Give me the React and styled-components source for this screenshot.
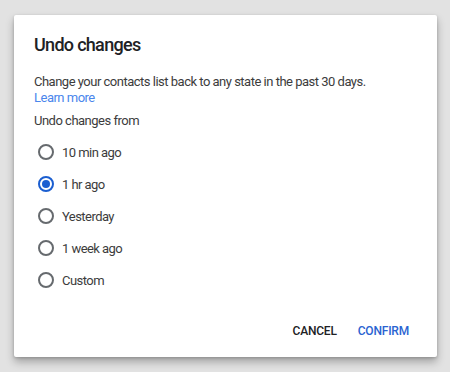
import React, { useState } from "react";
import styled, { createGlobalStyle } from "styled-components";

const Global = createGlobalStyle`
  html, body { margin: 0; padding: 0; background: #e2e2e2; }
  body { font-family: Roboto, "Noto Sans", "Liberation Sans", sans-serif; -webkit-font-smoothing: antialiased; }
  * { box-sizing: border-box; }
`;

const Page = styled.div`
  width: 450px;
  height: 372px;
  padding: 15px 13px 0 14px;
`;

const Card = styled.div`
  width: 423px;
  height: 342px;
  background: #fff;
  border-radius: 2px;
  box-shadow: 0 5px 9px rgba(0, 0, 0, 0.28), 0 1px 3px rgba(0, 0, 0, 0.18);
  padding: 18px 20px 0 20px;
  display: flex;
  flex-direction: column;
`;

const Title = styled.h2`
  margin: 0;
  font-size: 18px;
  line-height: 24px;
  font-weight: 500;
  letter-spacing: -0.7px;
  color: #202124;
`;

const Text = styled.p`
  margin: ${(p) => p.$mt || 0}px 0 0;
  font-size: 13px;
  line-height: 16px;
  letter-spacing: -0.5px;
  color: #3c3c3c;
`;

const Link = styled.a`
  color: #4a86ec;
  text-decoration: none;
`;

const Group = styled.div`
  margin-top: 7px;
  display: flex;
  flex-direction: column;
`;

const Row = styled.label`
  height: 32px;
  display: flex;
  align-items: center;
  gap: 8px;
  padding-left: 4px;
  font-size: 13px;
  letter-spacing: -0.55px;
  color: #3c3c3c;
  cursor: pointer;
`;

const Circle = styled.span`
  width: 16px;
  height: 16px;
  border-radius: 50%;
  border: 2px solid ${(p) => (p.$on ? "#1b5ed0" : "#666a6e")};
  display: flex;
  align-items: center;
  justify-content: center;
  flex: none;
  &::after {
    content: "";
    width: 8px;
    height: 8px;
    border-radius: 50%;
    background: #1b5ed0;
    display: ${(p) => (p.$on ? "block" : "none")};
  }
`;

const Actions = styled.div`
  margin-top: 17px;
  display: flex;
  justify-content: flex-end;
  gap: 5px;
`;

const Button = styled.button`
  border: none;
  background: none;
  height: 36px;
  padding: 0 8px;
  font-family: inherit;
  font-size: 12px;
  font-weight: 500;
  letter-spacing: -0.2px;
  text-transform: uppercase;
  color: ${(p) => (p.$primary ? "#2a63d1" : "#202124")};
  cursor: pointer;
`;

const options = ["10 min ago", "1 hr ago", "Yesterday", "1 week ago", "Custom"];

export default function App() {
  const [sel, setSel] = useState(1);
  return (
    <>
      <Global />
      <Page>
        <Card>
          <Title>Undo changes</Title>
          <Text $mt={17}>
            Change your contacts list back to any state in the past 30 days.
            <br />
            <Link href="#">Learn more</Link>
          </Text>
          <Text $mt={7}>Undo changes from</Text>
          <Group>
            {options.map((o, i) => (
              <Row key={o} onClick={() => setSel(i)}>
                <Circle $on={sel === i} />
                {o}
              </Row>
            ))}
          </Group>
          <Actions>
            <Button>Cancel</Button>
            <Button $primary>Confirm</Button>
          </Actions>
        </Card>
      </Page>
    </>
  );
}
